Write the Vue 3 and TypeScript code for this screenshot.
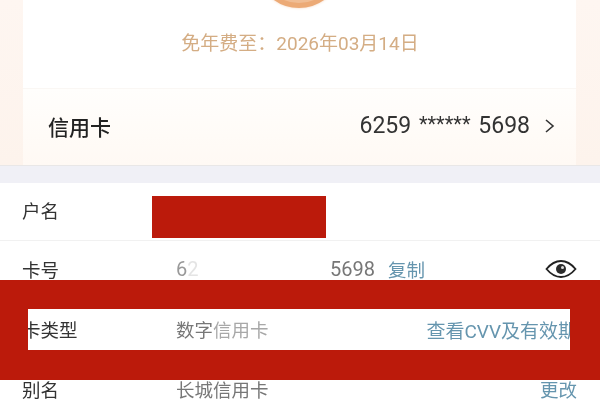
<script setup lang="ts">
const aliasValue = '长城信用卡'
</script>

<template>
  <div class="page">
    <section class="hero">
      <div class="card">
        <div class="card-top">
          <div class="badge"></div>
          <p class="fee">免年费至：2026年03月14日</p>
        </div>
        <div class="card-foot">
          <span class="foot-title">信用卡</span>
          <span class="foot-num">6259 <i class="stars">******</i> 5698</span>
          <svg class="chev" width="12" height="16" viewBox="0 0 12 16">
            <path d="M2 2l7 6-7 6" fill="none" stroke="#333" stroke-width="1.6" />
          </svg>
        </div>
      </div>
    </section>
    <div class="divider"></div>
    <section class="list">
      <div class="row row-name">
        <span class="label">户名</span>
        <span class="redact-name"></span>
      </div>
      <div class="row">
        <span class="label">卡号</span>
        <span class="value num-a">6<i class="fade-strong">2</i></span>
        <span class="value num-b">5698</span>
        <span class="link copy">复制</span>
        <svg class="eye" width="32" height="18" viewBox="0 0 32 18">
          <path d="M1.5 9C6.5 3 11 1 16 1s9.500 2 14.500 8C25.500 15 21 17 16 17S6.500 15 1.500 9z" fill="none" stroke="#222" stroke-width="1.8" />
          <circle cx="16" cy="9" r="5" fill="#2c2c2c" />
          <circle cx="17.500" cy="7.500" r="1.500" fill="#ddd" />
        </svg>
      </div>
      <div class="row row-type">
        <span class="label">卡类型</span>
        <span class="value">数字<i class="fade">信用卡</i></span>
        <span class="link right wide">查看CVV及有效期</span>
      </div>
      <div class="row">
        <span class="label">别名</span>
        <span class="value">{{ aliasValue }}</span>
        <span class="link right">更改</span>
      </div>
    </section>
    <div class="redact-band"></div>
  </div>
</template>

<style>
html, body { margin: 0; background: #fff; }
</style>

<style scoped>
.page {
  position: relative;
  width: 600px;
  height: 400px;
  overflow: hidden;
  background: #fff;
  font-family: Roboto, "Noto Sans CJK SC", sans-serif;
  filter: blur(0.45px);
}
.hero {
  height: 165px;
  padding: 0 24px 0 23px;
  box-sizing: border-box;
  background: linear-gradient(#fef6f1, #fdf3ec);
}
.card {
  height: 100%;
  display: flex;
  flex-direction: column;
  background: #fff;
}
.card-top {
  height: 89px;
  flex: none;
  display: flex;
  flex-direction: column;
  align-items: center;
  position: relative;
  border-bottom: 1px solid #faf7f4;
  box-sizing: border-box;
}
.badge {
  position: absolute;
  top: -78px;
  left: 50%;
  margin-left: -43.500px;
  width: 86px;
  height: 86px;
  border-radius: 50%;
  background: #f0bd94;
  box-sizing: border-box;
  border: 5px solid #ecaa76;
  box-shadow: 0 0 3px #f5d2b8;
}
.fee {
  margin: 32px 0 0 1px;
  font-size: 19px;
  line-height: 24px;
  color: #d4ad84;
}
.card-foot {
  flex: 1;
  display: flex;
  align-items: center;
  padding: 0 0 3px 25px;
  box-sizing: border-box;
  background: linear-gradient(#fffefc, #fff9f4);
}
.foot-title {
  font-size: 21px;
  font-weight: 500;
  color: #222;
}
.foot-num {
  margin-left: auto;
  font-size: 23px;
  color: #333;
}
.stars {
  font-style: normal;
  font-size: 20px;
  margin: 0 2px;
  vertical-align: 2px;
}
.chev { margin: 0 20px 0 14px; }
.divider {
  height: 18px;
  background: #f0f0f6;
  border-top: 1px solid #e9e7e7;
  box-sizing: border-box;
}
.list { background: #fff; }
.row {
  height: 60px;
  display: flex;
  align-items: center;
  padding: 0 23px 4px 22px;
  box-sizing: border-box;
  font-size: 18.500px;
  border-bottom: 1px solid #f1f1f1;
}
.row-name { height: 58px; }
.row-type { border-bottom: none; }
.label {
  width: 154px;
  flex: none;
  color: #333;
}
.value { color: #777; }
.value i { font-style: normal; }
.fade { color: #a8a8a8; }
.fade-strong { color: #e4e4e4; }
.num-a {
  width: 154px;
  flex: none;
  font-size: 20px;
  color: #999;
}
.num-b { font-size: 20px; }
.link { color: #6595ae; }
.wide { font-size: 19px; }
.copy { margin-left: 13px; }
.right { margin-left: auto; }
.eye { margin-left: auto; margin-right: 0; }
.redact-name {
  position: absolute;
  left: 152px;
  top: 196px;
  width: 174px;
  height: 42px;
  background: #bb1a0b;
}
.redact-band {
  position: absolute;
  left: 0;
  top: 280px;
  width: 600px;
  height: 100px;
  box-sizing: border-box;
  border-style: solid;
  border-color: #bb1a0b;
  border-width: 29px 30px 30px 28px;
}
</style>
